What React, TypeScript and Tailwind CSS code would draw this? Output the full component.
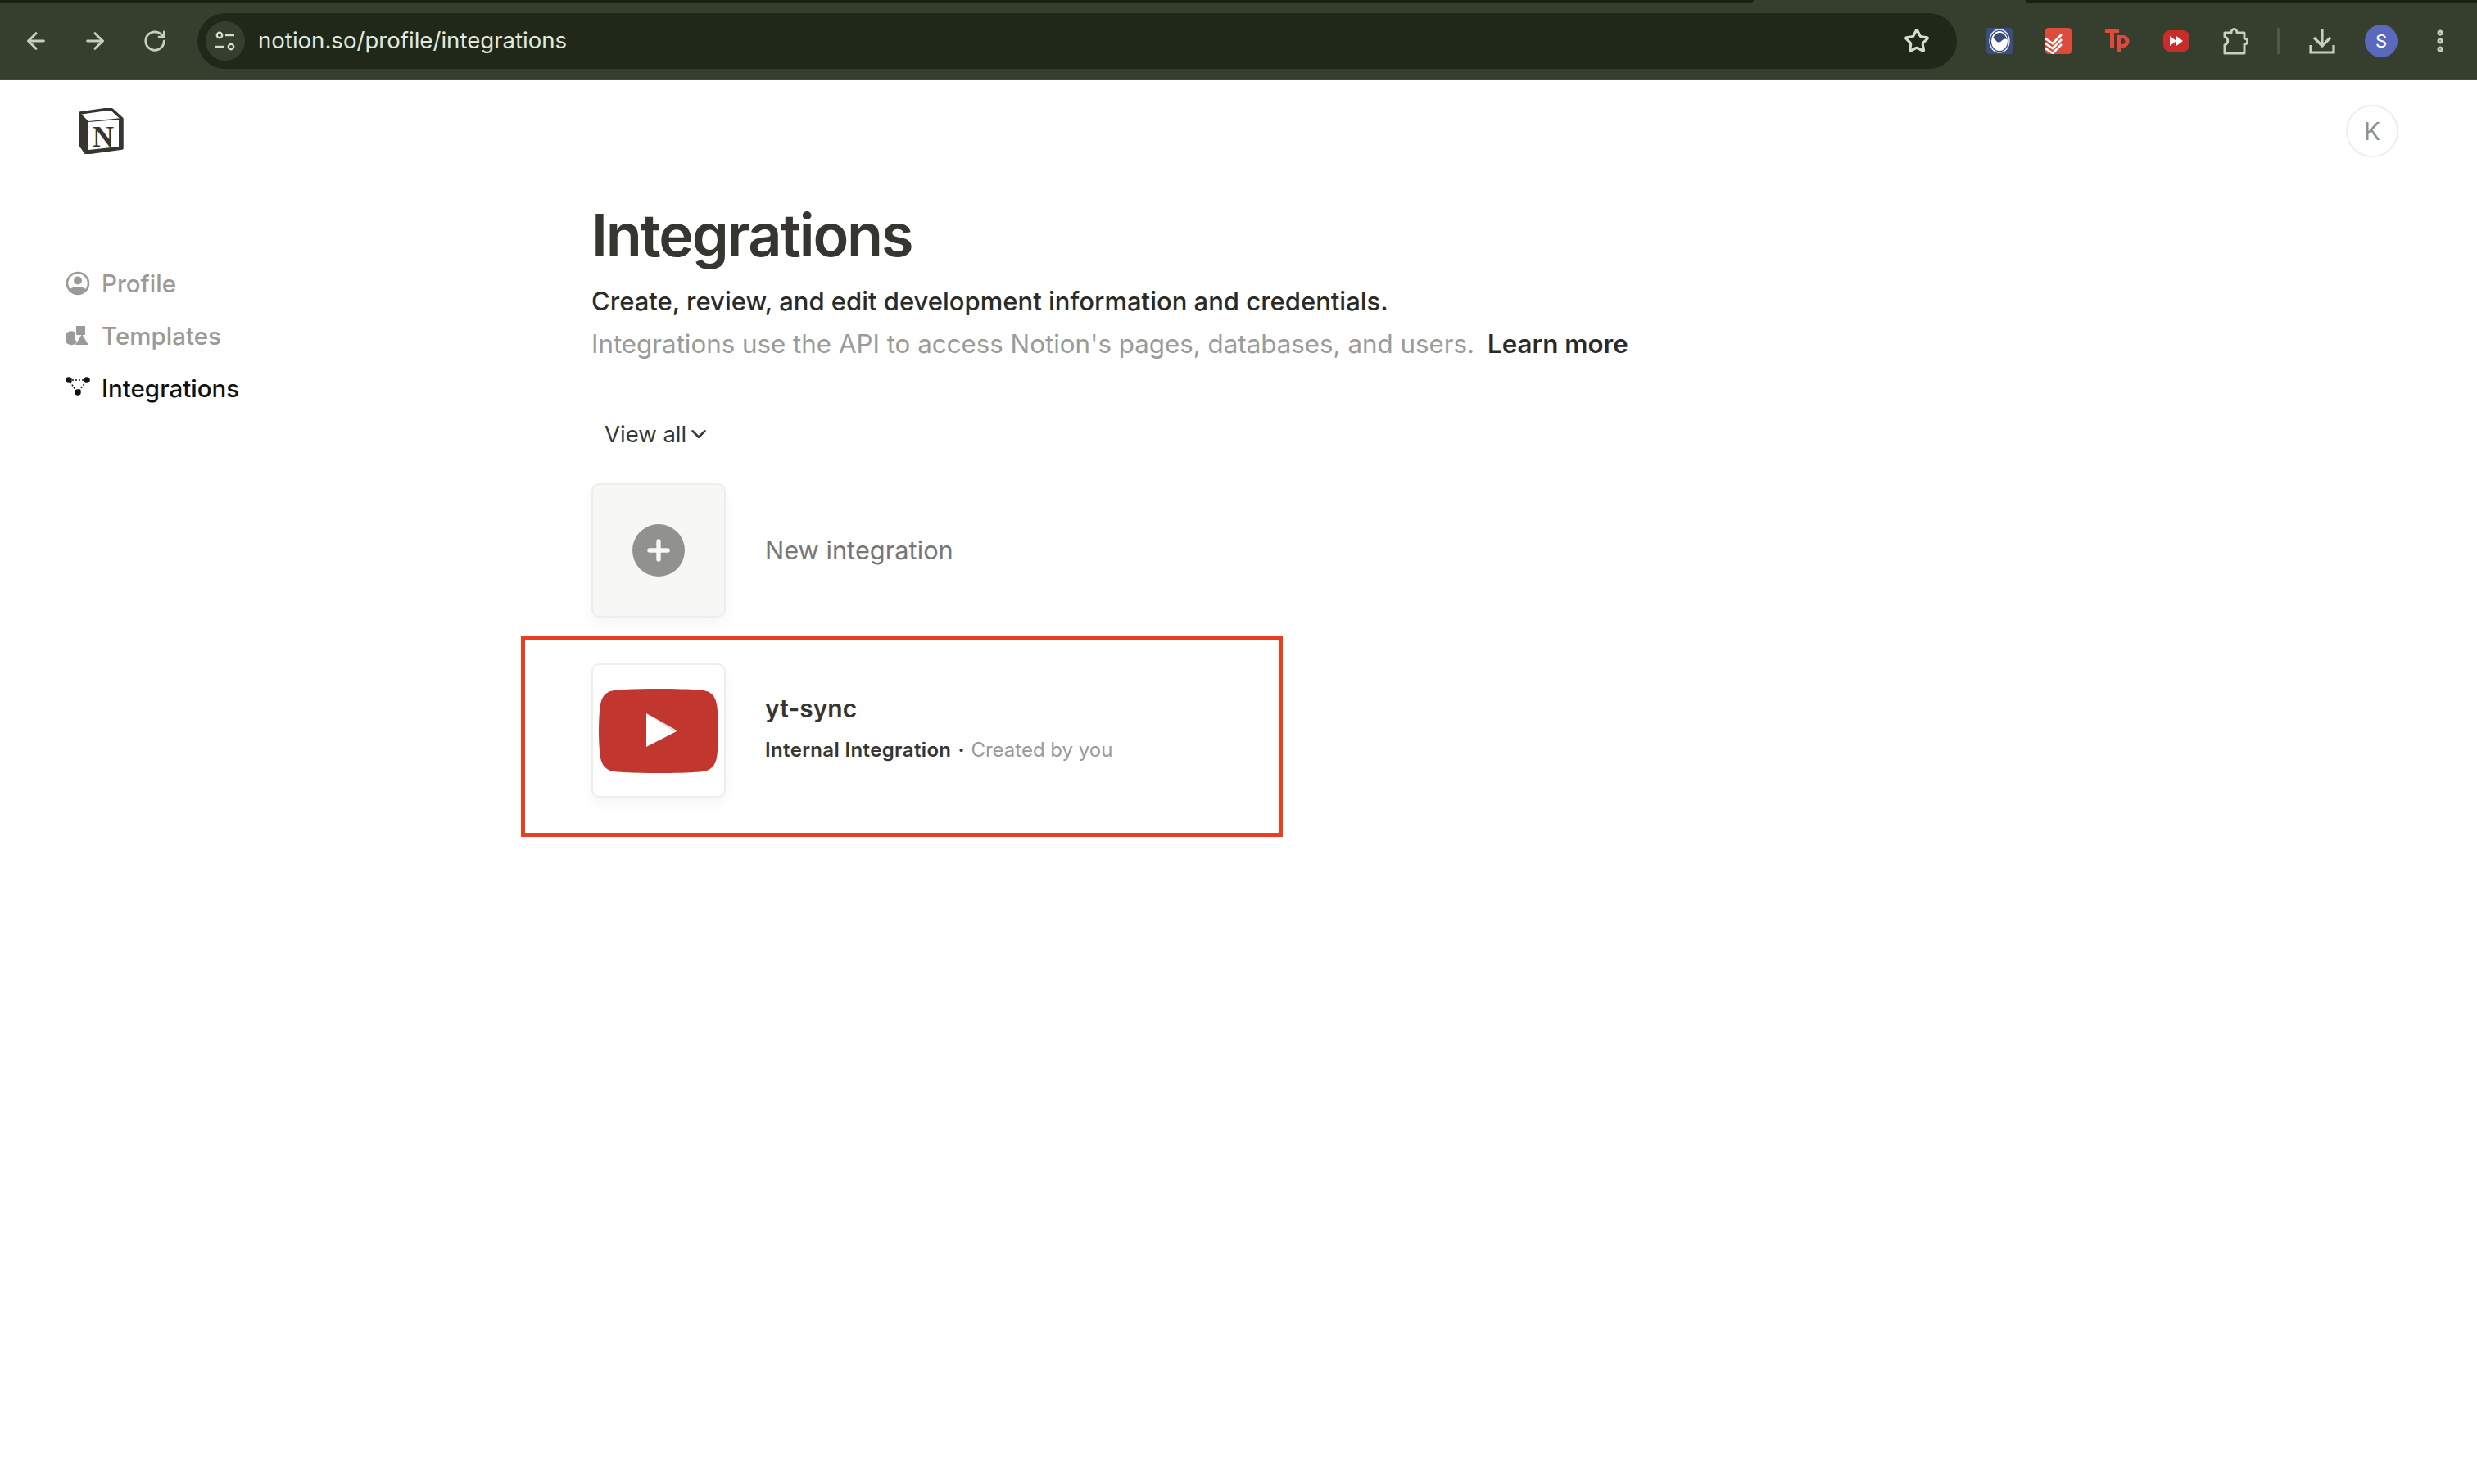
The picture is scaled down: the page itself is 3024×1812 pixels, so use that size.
import { ArrowLeft, ArrowRight, RotateCw, Star, MoreVertical, Plus, ChevronDown } from "lucide-react";

function NotionLogo() {
  return (
    <svg width="56" height="56" viewBox="0 0 56 56" className="block">
      <path d="M3 6 L38 1 Q41 1 43 3 L54 13 V49 L10 55 L3 45 Z" fill="#fff" stroke="#37352f" strokeWidth="3.5" strokeLinejoin="round" />
      <path d="M3 6 L13 16 L54 12 V50 L12 55 L3 45 Z" fill="#37352f" />
      <path d="M13 17 L50 14 V47 L13 51 Z" fill="#fff" />
      <text x="31" y="47" textAnchor="middle" fontFamily="'Liberation Serif', serif" fontWeight="700" fontSize="36" fill="#37352f">N</text>
    </svg>
  );
}

function TuneIcon() {
  return (
    <svg width="26" height="26" viewBox="0 0 26 26" fill="none" stroke="#d5dccb" strokeWidth="2.4">
      <circle cx="6" cy="6" r="3.2" />
      <path d="M13 6 H24" />
      <path d="M1 20 H12" />
      <circle cx="20" cy="20" r="3.2" />
    </svg>
  );
}

function ExtBlue() {
  return (
    <div className="w-8 h-8 rounded-[3px] bg-[#3b4d7c] flex items-center justify-center">
      <svg width="26" height="30" viewBox="0 0 26 30">
        <ellipse cx="13" cy="15" rx="12" ry="14" fill="none" stroke="#dfe3ee" strokeWidth="1.5" />
        <ellipse cx="13" cy="15" rx="10" ry="12" fill="#fff" />
        <path d="M5 12 C8 3 19 2 22 13 C17 10 15 19 10 16 C8 14 7 12 5 12 Z" fill="#3b4d7c" />
      </svg>
    </div>
  );
}

function ExtTodoist() {
  return (
    <div className="w-8 h-8 rounded-[4px] bg-[#dc4c3e] flex items-center justify-center">
      <svg width="32" height="32" viewBox="0 0 32 32" fill="none" stroke="#fff" strokeWidth="2.6">
        <path d="M0 13 L9 19 L20 8" />
        <path d="M0 19 L9 25 L20 14" />
        <path d="M0 25 L9 31 L20 20" />
      </svg>
    </div>
  );
}

function ExtTp() {
  return (
    <svg width="30" height="32" viewBox="0 0 30 32">
      <path d="M0 1 H17 V6 H11 V24 H6 V6 H0 Z" fill="#e2483d" />
      <path d="M14 9 H22 A7.5 7.5 0 0 1 22 24 H19 V29 H14 Z M19 13 V20 H21 A3.5 3.5 0 0 0 21 13 Z" fill="#e2483d" />
    </svg>
  );
}

function ExtFast() {
  return (
    <div className="w-8 h-[26px] rounded-[8px] bg-[#c92c2a] flex items-center justify-center">
      <svg width="16" height="12" viewBox="0 0 16 12" fill="#fff">
        <path d="M0 0 L8 6 L0 12 Z" />
        <path d="M8 0 L16 6 L8 12 Z" />
      </svg>
    </div>
  );
}

function PuzzleIcon() {
  return (
    <svg width="32" height="34" viewBox="0 0 32 34" fill="none" stroke="#c5cfb9" strokeWidth="3" strokeLinejoin="round">
      <path d="M3 7 H11 C11 1 18 1 18 7 H27 V14 C32 14 32 21 27 21 V32 H3 V22 C8 20 8 14 3 12 Z" />
    </svg>
  );
}

function DownloadIcon() {
  return (
    <svg width="32" height="32" viewBox="0 0 32 32" fill="none" stroke="#c5cfb9" strokeWidth="3.2">
      <path d="M16 1 V22" />
      <path d="M6 12 L16 22 L26 12" />
      <path d="M2 21 V30 H30 V21" />
    </svg>
  );
}

function ProfileIcon() {
  return (
    <svg width="30" height="30" viewBox="0 0 30 30">
      <circle cx="15" cy="15" r="13" fill="none" stroke="#9b9a97" strokeWidth="2.6" />
      <circle cx="15" cy="11.5" r="5" fill="#9b9a97" />
      <path d="M5 23 C7 18 23 18 25 23 C20 29 10 29 5 23 Z" fill="#9b9a97" />
    </svg>
  );
}

function TemplatesIcon() {
  return (
    <svg width="30" height="30" viewBox="0 0 30 30" fill="#9b9a97">
      <rect x="13" y="3" width="11" height="11" />
      <path d="M11 10 A8.5 8.5 0 1 0 14 23 L11 18 Z" />
      <path d="M20 13 L28 26 H12 Z" />
    </svg>
  );
}

function IntegrationsIcon() {
  return (
    <svg width="30" height="30" viewBox="0 0 30 30">
      <path d="M4 5 H26 L15 21 Z" fill="none" stroke="#111" strokeWidth="1.6" strokeDasharray="2 2" />
      <circle cx="4" cy="5" r="3.8" fill="#111" />
      <circle cx="26" cy="5" r="3.8" fill="#111" />
      <circle cx="15" cy="20" r="3.8" fill="#111" />
    </svg>
  );
}

function YoutubeLogo() {
  return (
    <svg width="146" height="103" viewBox="0 0 146 103" className="block">
      <path d="M22 1.5 C50 -0.5 96 -0.5 124 1.5 C137 2.5 143 9 144.5 22 C146.5 40 146.5 63 144.5 81 C143 94 137 100.5 124 101.5 C96 103.5 50 103.5 22 101.5 C9 100.5 3 94 1.5 81 C-0.5 63 -0.5 40 1.5 22 C3 9 9 2.5 22 1.5 Z" fill="#c1372f" />
      <path d="M58 30 L96 51.5 L58 71 Z" fill="#fff" />
      <path d="M58 30 L96 51.5 L90 51 Z" fill="#e3ddd8" />
    </svg>
  );
}

const navItems = [
  { label: "Profile", icon: <ProfileIcon />, active: false },
  { label: "Templates", icon: <TemplatesIcon />, active: false },
  { label: "Integrations", icon: <IntegrationsIcon />, active: true },
];

export default function App() {
  return (
    <div className="min-h-[1812px] bg-white text-[#37352f] font-['Inter',sans-serif]">
      {/* BROWSER BAR */}
      <div className="bg-[#363f2e]">
        <div className="h-1 flex justify-between">
          <div className="w-[2141px] bg-[#18220f] rounded-br-[4px]" />
          <div className="w-[551px] bg-[#18220f] rounded-bl-[4px]" />
        </div>
        <div className="h-[94px] border-b-2 border-[#454c3f] flex items-center pl-[28px] text-[#c5cfb9]">
          <ArrowLeft size={32} strokeWidth={2.2} />
          <ArrowRight size={32} strokeWidth={2.2} className="ml-10" />
          <RotateCw size={30} strokeWidth={2.2} className="ml-[42px]" />
          <div className="ml-[37px] w-[2148px] h-[68px] rounded-full bg-[#1f2819] flex items-center pl-[10px]">
            <div className="w-12 h-12 rounded-full bg-[#363f2e] flex items-center justify-center">
              <TuneIcon />
            </div>
            <span className="ml-4 text-[27.6px] text-[#e3e8dc]">notion.so/profile/integrations</span>
            <Star size={32} strokeWidth={2.4} className="ml-auto mr-[33px] text-[#d5dccb]" />
          </div>
          <div className="ml-[36px] flex items-center">
            <ExtBlue />
            <div className="ml-10"><ExtTodoist /></div>
            <div className="ml-[41px]"><ExtTp /></div>
            <div className="ml-[41px]"><ExtFast /></div>
            <div className="ml-10"><PuzzleIcon /></div>
            <div className="ml-[35px] w-[3px] h-8 bg-[#4f5947]" />
            <div className="ml-9"><DownloadIcon /></div>
            <div className="ml-[36px] w-10 h-10 rounded-full bg-[#5b69bd] text-[#fff] text-[22px] flex items-center justify-center">S</div>
            <MoreVertical size={34} strokeWidth={3} className="ml-[35px]" />
          </div>
        </div>
      </div>

      {/* TOP ROW */}
      <div className="flex items-center justify-between pt-[30px] pl-[95px] pr-[96px]">
        <NotionLogo />
        <div className="w-16 h-16 rounded-full border-2 border-[#eeeeec] text-[#91918e] text-[30px] flex items-center justify-center">K</div>
      </div>

      <div className="flex">
        {/* SIDEBAR */}
        <nav className="w-[722px] shrink-0 pl-[80px] pt-[136px] flex flex-col gap-[28px]">
          {navItems.map((item) => (
            <div key={item.label} className={`flex items-center gap-[14px] h-9 text-[29.5px] font-medium ${item.active ? "text-[#111111]" : "text-[#9b9a97]"}`}>
              {item.icon}
              <span>{item.label}</span>
            </div>
          ))}
        </nav>

        {/* MAIN */}
        <main className="pt-[52px]">
          <h1 className="text-[72px] leading-[86px] font-semibold tracking-[-0.03em] text-[#37352f]">Integrations</h1>
          <p className="mt-4 text-[31px] leading-[44px] font-medium text-[#2b2a26]">Create, review, and edit development information and credentials.</p>
          <p className="mt-2 text-[31.3px] leading-[44px] text-[#9b9a97]">
            Integrations use the API to access Notion's pages, databases, and users.
            <span className="ml-[16px] font-semibold text-[#2b2a26]">Learn more</span>
          </p>

          <div className="mt-[70px] ml-4 flex items-center text-[27.5px] leading-[36px] text-[#37352f]">
            View all
            <ChevronDown size={30} strokeWidth={2} className="-mr-2" />
          </div>

          {/* NEW INTEGRATION */}
          <div className="mt-[42px] flex items-center gap-[48px]">
            <div className="w-[164px] h-[164px] rounded-[10px] bg-[#f7f7f5] border-2 border-[#ededeb] shadow-[0_8px_16px_rgba(15,15,15,0.04)] flex items-center justify-center">
              <div className="w-16 h-16 rounded-full bg-[#91918e] flex items-center justify-center">
                <Plus size={38} strokeWidth={3.4} className="text-[#f7f7f5]" />
              </div>
            </div>
            <span className="text-[30.8px] text-[#787774]">New integration</span>
          </div>

          {/* HIGHLIGHTED CARD */}
          <div className="mt-[22px] -ml-[86px] w-[930px] h-[246px] border-[5px] border-[#ea3e23] pl-[81px] pt-[29px]">
            <div className="flex items-center gap-[48px]">
              <div className="w-[164px] h-[164px] rounded-[10px] bg-white border-2 border-[#ededeb] shadow-[0_8px_16px_rgba(15,15,15,0.04)] flex items-center justify-center">
                <YoutubeLogo />
              </div>
              <div className="-mt-[8px]">
                <div className="text-[30px] leading-[40px] font-semibold text-[#37352f]">yt-sync</div>
                <div className="mt-[15px] flex items-center text-[24px] leading-[32px]">
                  <span className="font-semibold tracking-[0.015em] text-[#37352f]">Internal Integration</span>
                  <span className="mx-2 font-bold text-[#37352f]">·</span>
                  <span className="text-[#9b9a97]">Created by you</span>
                </div>
              </div>
            </div>
          </div>
        </main>
      </div>
    </div>
  );
}
